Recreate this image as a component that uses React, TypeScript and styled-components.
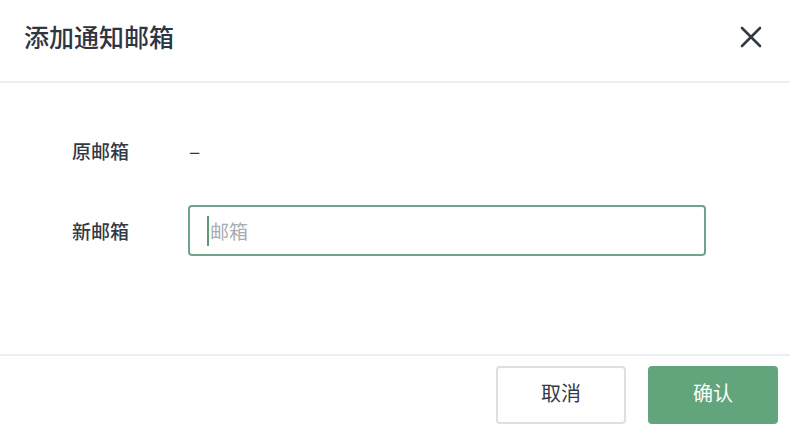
import React from "react";
import styled, { createGlobalStyle } from "styled-components";

const Global = createGlobalStyle`
  html, body { margin: 0; padding: 0; background: #fff; }
  body { font-family: "Noto Sans CJK SC", "Noto Sans", sans-serif; line-height: 1; }
  * { box-sizing: border-box; }
`;

const Dialog = styled.div`
  width: 790px;
  height: 436px;
  display: flex;
  flex-direction: column;
  background: #fff;
`;

const Header = styled.div`
  height: 83px;
  flex: none;
  display: flex;
  align-items: center;
  justify-content: space-between;
  padding: 0 27px 8px 24px;
  border-bottom: 2px solid #eceef1;
`;

const Title = styled.h2`
  margin: 0;
  font-size: 25px;
  line-height: 1;
  font-weight: 500;
  color: #2f3541;
`;

const CloseButton = styled.button`
  width: 24px;
  height: 24px;
  padding: 0;
  border: none;
  background: transparent;
  display: flex;
  align-items: center;
  justify-content: center;
  cursor: pointer;
`;

const Body = styled.div`
  flex: 1;
  padding: 48px 84px 0 72px;
  display: flex;
  flex-direction: column;
  gap: 34px;
`;

const Row = styled.div<{ $h: number }>`
  display: flex;
  align-items: center;
  height: ${(p) => p.$h}px;
`;

const Label = styled.div`
  width: 116px;
  flex: none;
  font-size: 19px;
  line-height: 1;
  font-weight: 500;
  color: #333a44;
  padding-bottom: 1px;
`;

const Value = styled.div`
  font-size: 21px;
  line-height: 1;
  color: #333a44;
  padding-left: 1px;
  padding-bottom: 2px;
`;

const InputBox = styled.div`
  flex: 1;
  height: 51px;
  border: 2px solid #6ea58a;
  border-radius: 4px;
  display: flex;
  align-items: center;
  padding-left: 17px;
  gap: 1px;
`;

const Caret = styled.span`
  width: 2px;
  height: 30px;
  background: #5a9a74;
`;

const Placeholder = styled.span`
  font-size: 19px;
  line-height: 1;
  color: #a7abb2;
`;

const Footer = styled.div`
  height: 82px;
  flex: none;
  border-top: 2px solid #eceef1;
  display: flex;
  justify-content: flex-end;
  align-items: flex-start;
  gap: 22px;
  padding: 10px 12px 0 0;
`;

const Button = styled.button<{ $primary?: boolean }>`
  width: 130px;
  height: 58px;
  border-radius: 4px;
  font-family: inherit;
  font-size: 20px;
  line-height: 1;
  padding: 0 0 5px;
  cursor: pointer;
  border: ${(p) => (p.$primary ? "none" : "2px solid #dcdfe4")};
  background: ${(p) => (p.$primary ? "#62a57c" : "#fff")};
  color: ${(p) => (p.$primary ? "#fff" : "#333a44")};
`;

export default function App() {
  return (
    <>
      <Global />
      <Dialog>
        <Header>
          <Title>添加通知邮箱</Title>
          <CloseButton aria-label="关闭">
            <svg width="22" height="22" viewBox="0 0 22 22">
              <path d="M2 2 L20 20 M20 2 L2 20" stroke="#333a44" strokeWidth="2.6" strokeLinecap="round" />
            </svg>
          </CloseButton>
        </Header>
        <Body>
          <Row $h={40}>
            <Label>原邮箱</Label>
            <Value>–</Value>
          </Row>
          <Row $h={51}>
            <Label>新邮箱</Label>
            <InputBox>
              <Caret />
              <Placeholder>邮箱</Placeholder>
            </InputBox>
          </Row>
        </Body>
        <Footer>
          <Button>取消</Button>
          <Button $primary>确认</Button>
        </Footer>
      </Dialog>
    </>
  );
}
